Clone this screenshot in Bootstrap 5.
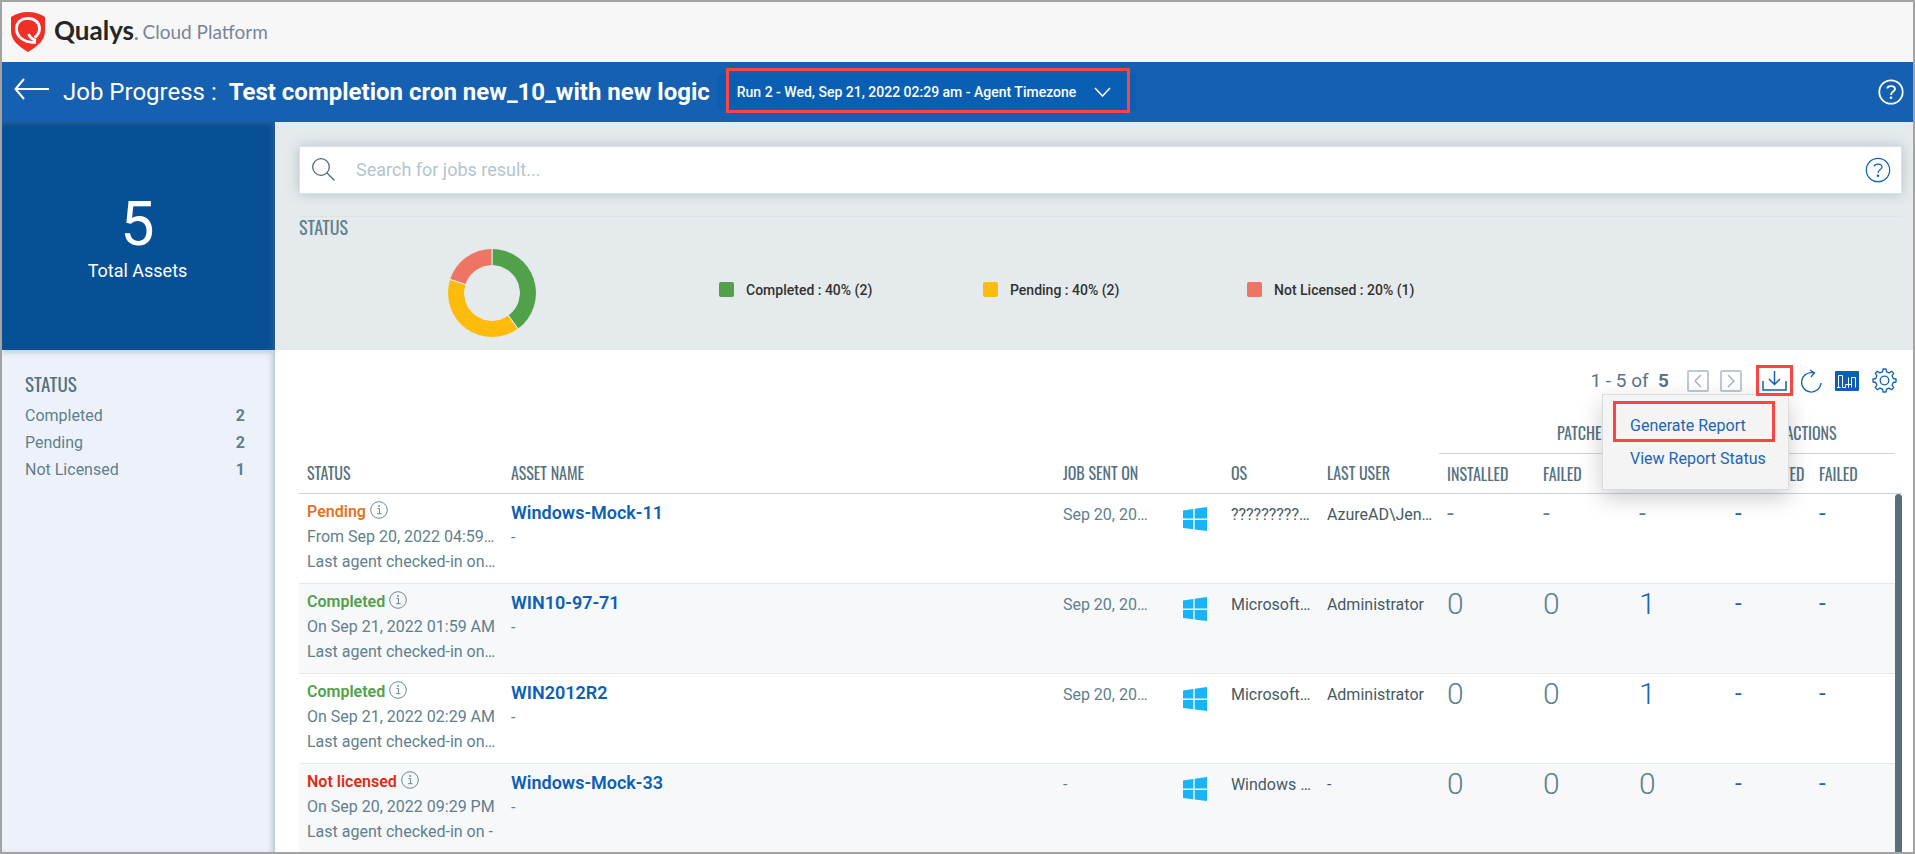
<!DOCTYPE html>
<html lang="en">
<head>
<meta charset="utf-8">
<meta name="viewport" content="width=device-width, initial-scale=1">
<title>Job Progress</title>
<link href="https://cdn.jsdelivr.net/npm/bootstrap@5.3.0/dist/css/bootstrap.min.css" rel="stylesheet">
<style>
  :root { --slate:#5f7f8d; --link:#0b5fb5; --mark:#fc4444; }
  body { font-family:Roboto,"Liberation Sans",sans-serif; font-size:16px; line-height:20px; color:var(--slate); background:#fff; }
  .shell { height:100vh; border:2px solid #a3a3a3; overflow:hidden; }
  .narrow { font-family:"Oswald","Roboto Condensed","Liberation Sans Narrow",Roboto,sans-serif; font-weight:400; }
  .topbar { height:60px; background:#f7f7f7; padding-left:9px; }
  .brand { font-family:Lato,sans-serif; font-weight:700; font-size:26px; color:#262626; margin-left:9px; }
  .brand-sub { font-family:Lato,sans-serif; font-size:19px; color:#76859b; }
  .jobbar { height:60px; background:#1560b1; color:#fff; padding:0 9px 0 12px; }
  .jobbar h1 { font-size:24px; line-height:28px; font-weight:400; margin:0 0 0 13px; }
  .jobbar h1 b { margin-left:6px; }
  .back { margin-bottom:6px; }
  .run-btn { height:36px; background:#0a5fb5; color:#fff; border:0; border-radius:0; font-size:14px; font-weight:500; padding:0 25px 0 20px; margin-left:7px; position:relative; }
  .run-btn svg { margin-left:18px; }
  .run-btn::after { content:""; position:absolute; inset:-6px 6px -3px 9px; border:3px solid var(--mark); }
  .icon-btn { background:none; border:0; padding:0; line-height:0; color:var(--link); }
  .side { width:273px; background:#edf2fa; box-shadow:inset -5px 0 6px -3px #a9bcc9; }
  .total { height:228px; background:#075095; color:#fff; box-shadow:inset -4px 0 6px -2px #2d5f92,inset 0 4px 6px -3px #2d5f92,0 3px 5px #c3d0da; padding:66px 2px 0 0; }
  .total-num { font-size:61px; line-height:72px; }
  .total-label { font-size:18px; line-height:22px; }
  .side h2 { font-size:19px; line-height:22px; color:#557180; margin:0 0 12px; }
  .side-list { padding:22px 30px 0 23px; }
  .side-list li { line-height:20px; padding-bottom:7px; }
  .summary { height:228px; background:#e5eaec; padding:24px 11px 0 24px; }
  .search { height:48px; background:#fff; border:1px solid #dbe2e5; box-shadow:0 0 12px #b4c2c9; padding:0 10px 0 12px; }
  .search input { font-size:18px; border:0; box-shadow:none; padding:0 0 0 21px; color:#333; }
  .search input::placeholder { color:#b4c5ce; opacity:1; }
  .chart-head { border-top:1px solid #dde3e6; margin-top:22px; font-size:18px; line-height:20px; }
  .chart { height:90px; margin-top:11px; color:#333; font-weight:500; font-size:14px; padding-left:148px; }
  .legend-item { width:264px; gap:12px; margin-top:-6px; }
  .chart ul { margin-left:182px; }
  .sw { width:15px; height:15px; border-radius:2px; }
  .results { padding:0 11px 0 24px; }
  .toolbar { height:64px; padding:0 5px 2px 0; }
  .pager { font-size:19px; color:#5b7582; margin-right:18px; }
  .pg { width:22px; height:22px; border:2px solid #bccad1; border-radius:2px; color:#a5b6c0; display:grid; place-items:center; padding:0; background:none; margin-right:11px; }
  .dl { width:37px; height:31px; border:3px solid var(--mark); display:grid; place-items:center; position:relative; z-index:4; }
  .dl-wrap { margin:0 8px 0 3px; }
  .menu { top:29px; left:-154px; width:187px; height:96px; background:#f4f4f4; border:1px solid #d6dee2; box-shadow:0 8px 22px #0003; padding:6px 13px 0 10px; z-index:3; }
  .menu a { color:#1b66b5; line-height:20px; text-decoration:none; display:block; white-space:nowrap; }
  .menu a.first { border:3px solid var(--mark); padding:12px 0 3px 14px; height:41px; }
  .menu a.second { padding:7px 0 0 17px; }
  .tools { gap:13px; }
  .grid { table-layout:fixed; width:100%; margin:0; }
  .grid th { font-size:16px; line-height:16px; color:#557180; padding:0 8px; text-transform:uppercase; height:40px; vertical-align:middle; white-space:nowrap; }
  .grid tr.groups th { text-align:center; border-bottom:1px solid #cfd6da; }
  .grid tr.groups th.blank { border-bottom:0; }
  .grid tr.heads th { border-bottom:1px solid #cdd4d8; }
  .grid td { height:90px; vertical-align:top; padding:11px 8px 0; border-bottom:1px solid #e4e9ec; white-space:nowrap; }
  .grid tbody tr:nth-child(even) { background:#f7f8fa; }
  .grid td.st { padding-top:6px; }
  .grid td.st div { line-height:25px; }
  .grid td.st div.state { line-height:24px; font-weight:600; }
  .grid td.st .info { margin-top:-5px; }
  .asset { font-size:18px; font-weight:600; line-height:22px; color:var(--link); text-decoration:none; }
  .grid td.asset-cell { padding-top:8px; }
  .grid td.os { padding-top:13px; }
  .dark { color:#455a64; }
  .grid td.num { font-weight:300; font-size:30px; line-height:22px; padding-top:9px; }
  .grid td.dash { font-size:24px; line-height:20px; padding-top:9px; }
  .blue { color:#1b66b5; }
  .thumb { right:0; top:80px; bottom:0; width:7px; background:#58707e; border-radius:4px 4px 0 0; }
</style>
</head>
<body>
<svg width="0" height="0" class="position-absolute" aria-hidden="true">
  <symbol id="i-info" viewBox="0 0 18 18"><g fill="none" stroke="#6d8794"><circle cx="9" cy="9" r="8.3"/><path d="M7.500 7.500h2v5M7 12.700h4.500"/></g><circle cx="9" cy="5" r=".9" fill="#6d8794"/></symbol>
  <symbol id="i-win" viewBox="0 0 24 24"><path fill="#19b3f7" d="M0 3.400 10.300 2v9.500H0zM11.700 1.800 24 0v11.500H11.700zM0 13h10.300v9.300L0 21zM11.700 13H24v11l-12.300-1.500z"/></symbol>
  <symbol id="i-help" viewBox="0 0 26 26"><g fill="none" stroke="currentColor"><circle cx="13" cy="13" r="11.700"/><path d="M9.300 9.500C9.500 6.300 17 6.300 17 10c0 2.600-4 2.600-4 6"/></g><circle cx="13" cy="18.800" r="1.300" fill="currentColor"/></symbol>
</svg>
<div class="shell d-flex flex-column">
  <header class="topbar d-flex align-items-center">
    <svg width="34" height="40" viewBox="0 0 34 40"><path fill="#ee3124" d="M17 0c6 0 12 1.500 17 5v14c0 9-7 15-17 21C7 34 0 28 0 19V5c5-3.500 11-5 17-5z"/><path d="M25 30.300C12 31 5.500 24 5.500 16.500 5.500 10 10.500 6.300 17 6.300S28.500 10.500 28.500 16.500c0 4-2 7-5 9" fill="none" stroke="#fff" stroke-width="2.800"/><path d="M17.500 22c1.500 3.500 4 5.500 7.500 6.500" fill="none" stroke="#fff" stroke-width="2.800"/></svg>
    <span class="brand">Qualys<small class="brand-sub">.</small></span>
    <span class="brand-sub ms-1">Cloud Platform</span>
  </header>
  <div class="jobbar d-flex align-items-center">
    <button class="icon-btn back text-white" aria-label="Back"><svg width="36" height="22" viewBox="0 0 36 22" fill="none" stroke="#fff" stroke-width="2"><path d="M35 11H1.500M10 1 1.500 11 10 21"/></svg></button>
    <h1>Job Progress : <b>Test completion cron new_10_with new logic</b></h1>
    <button class="run-btn d-flex align-items-center" aria-haspopup="listbox">Run 2 - Wed, Sep 21, 2022 02:29 am - Agent Timezone
      <svg width="17" height="10" viewBox="0 0 17 10" fill="none" stroke="#fff" stroke-width="1.500"><path d="m1 1 7.500 8L16 1"/></svg></button>
    <button class="icon-btn text-white ms-auto" aria-label="Help"><svg width="26" height="26" stroke-width="1.800"><use href="#i-help"/></svg></button>
  </div>
  <div class="d-flex flex-grow-1 overflow-hidden">
    <aside class="side flex-shrink-0">
      <div class="total text-center"><div class="total-num">5</div><div class="total-label">Total Assets</div></div>
      <div class="side-list">
        <h2 class="narrow">STATUS</h2>
        <ul class="list-unstyled">
          <li class="d-flex justify-content-between"><span>Completed</span><b>2</b></li>
          <li class="d-flex justify-content-between"><span>Pending</span><b>2</b></li>
          <li class="d-flex justify-content-between"><span>Not Licensed</span><b>1</b></li>
        </ul>
      </div>
    </aside>
    <main class="flex-grow-1 d-flex flex-column overflow-hidden">
      <section class="summary flex-shrink-0">
        <form class="search d-flex align-items-center">
          <svg width="23" height="23" viewBox="0 0 23 23" fill="none" stroke="#4f6976" stroke-width="1.300" class="flex-shrink-0"><circle cx="9" cy="9" r="8.300"/><path d="m15 15 7.500 7.500"/></svg>
          <input class="form-control" type="text" aria-label="Search" placeholder="Search for jobs result...">
          <button type="button" class="icon-btn" aria-label="Search help"><svg width="26" height="26" stroke-width="1.200"><use href="#i-help"/></svg></button>
        </form>
        <div class="chart-head narrow">STATUS</div>
        <div class="chart d-flex align-items-center">
          <svg width="90" height="90" viewBox="-45 -45 90 90" stroke="#e5eaec"><path fill="#50a14a" d="M0-44.500A44.500 44.500 0 0 1 26.160 36L16.160 22.250A27.500 27.500 0 0 0 0-27.500z"/><path fill="#fdbc0b" d="M26.160 36A44.500 44.500 0 0 1-42.320-13.750L-26.150-8.500A27.500 27.500 0 0 0 16.160 22.250z"/><path fill="#ee7564" d="M-42.320-13.750A44.500 44.500 0 0 1 0-44.500V-27.500A27.500 27.500 0 0 0-26.150-8.500z"/></svg>
          <ul class="list-unstyled d-flex mb-0">
            <li class="legend-item d-flex align-items-center"><span class="sw" style="background:#50a14a"></span>Completed : 40% (2)</li>
            <li class="legend-item d-flex align-items-center"><span class="sw" style="background:#fdbc0b"></span>Pending : 40% (2)</li>
            <li class="legend-item d-flex align-items-center"><span class="sw" style="background:#ee7564"></span>Not Licensed : 20% (1)</li>
          </ul>
        </div>
      </section>
      <section class="results flex-grow-1 d-flex flex-column overflow-hidden">
        <div class="toolbar flex-shrink-0 d-flex align-items-center justify-content-end">
          <span class="pager">1 - 5 of &nbsp;<b>5</b></span>
          <button class="pg" aria-label="Previous"><svg width="8" height="14" viewBox="0 0 8 14" fill="none" stroke="currentColor" stroke-width="1.500"><path d="M7 1 1 7l6 6"/></svg></button>
          <button class="pg" aria-label="Next"><svg width="8" height="14" viewBox="0 0 8 14" fill="none" stroke="currentColor" stroke-width="1.500"><path d="m1 1 6 6-6 6"/></svg></button>
          <div class="dl-wrap position-relative">
            <button class="icon-btn dl" aria-label="Download"><svg width="26" height="22" viewBox="0 0 26 22" fill="none" stroke="#1560b1" stroke-width="1.500"><path d="M1 11v9h23v-9M12.500 1v13M7 9l5.500 5.500L18 9"/></svg></button>
            <div class="menu position-absolute"><a class="first" href="#">Generate Report</a><a class="second" href="#">View Report Status</a></div>
          </div>
          <div class="tools d-flex align-items-center">
          <button class="icon-btn" aria-label="Refresh"><svg width="21" height="24" viewBox="0 0 21 24" fill="none" stroke="#1560b1" stroke-width="1.300"><path d="M13 4A9.700 9.700 0 1 0 20 14M9 1l4.500 3L10 8"/></svg></button>
          <button class="icon-btn" aria-label="Chart"><svg width="24" height="20" viewBox="0 0 24 20"><rect width="24" height="20" rx="1" fill="#0b5fb5"/><path d="M3.500 16.500v-12h4v12M7.500 16.500M10.500 16.500v-3h3v3M13.500 16.500v-10h0M16.500 16.500v-10h4v10M2 16.500h3.500M7.500 16.500h3M13.500 13.500h3" fill="none" stroke="#fff"/></svg></button>
          <button class="icon-btn" aria-label="Settings"><svg width="25" height="25" viewBox="0 0 25 25" fill="none" stroke="#1560b1" stroke-width="1.300" stroke-linejoin="round"><circle cx="12.500" cy="12.500" r="4.300"/><path d="M10.500 3.800 11 1h3l.5 2.800 2.700 1.100L19.600 3.300l2.100 2.100-1.600 2.400 1.100 2.700L24 11v3l-2.800.5-1.100 2.700 1.600 2.400-2.100 2.100-2.400-1.600-2.700 1.100L14 24h-3l-.5-2.800-2.700-1.100-2.400 1.600-2.100-2.100 1.600-2.400-1.100-2.700L1 14v-3l2.800-.5 1.100-2.700-1.600-2.400 2.100-2.100 2.400 1.600z"/></svg></button>
          </div>
        </div>
        <div class="flex-grow-1 position-relative overflow-hidden">
          <table class="grid">
            <colgroup><col style="width:204px"><col><col style="width:120px"><col style="width:48px"><col style="width:96px"><col style="width:120px"><col style="width:96px"><col style="width:96px"><col style="width:96px"><col style="width:84px"><col style="width:84px"><col style="width:7px"></colgroup>
            <thead>
              <tr class="groups"><th class="blank" colspan="6"></th><th class="narrow" colspan="3" scope="colgroup">Patches</th><th class="narrow" colspan="2" scope="colgroup">Actions</th><th class="blank p-0"></th></tr>
              <tr class="heads"><th class="narrow">Status</th><th class="narrow">Asset Name</th><th class="narrow" colspan="2">Job Sent On</th><th class="narrow">OS</th><th class="narrow">Last User</th><th class="narrow">Installed</th><th class="narrow">Failed</th><th class="narrow">Skipped</th><th class="narrow">Completed</th><th class="narrow">Failed</th><th class="p-0"></th></tr>
            </thead>
            <tbody id="rows"></tbody>
          </table>
          <div class="thumb position-absolute"></div>
        </div>
      </section>
    </main>
  </div>
</div>
<script src="https://cdn.jsdelivr.net/npm/bootstrap@5.3.0/dist/js/bootstrap.bundle.min.js"></script>
<script>
  const jobs = [
    ['Pending', '#e8711f', 'From Sep 20, 2022 04:59…', 'Last agent checked-in on…', 'Windows-Mock-11', 'Sep 20, 20…', '?????????…', 'AzureAD\\Jen…', ['-', '-', '-']],
    ['Completed', '#50a14a', 'On Sep 21, 2022 01:59 AM', 'Last agent checked-in on…', 'WIN10-97-71', 'Sep 20, 20…', 'Microsoft…', 'Administrator', [0, 0, 1]],
    ['Completed', '#50a14a', 'On Sep 21, 2022 02:29 AM', 'Last agent checked-in on…', 'WIN2012R2', 'Sep 20, 20…', 'Microsoft…', 'Administrator', [0, 0, 1]],
    ['Not licensed', '#e02b16', 'On Sep 20, 2022 09:29 PM', 'Last agent checked-in on -', 'Windows-Mock-33', '-', 'Windows …', '-', [0, 0, 0]]
  ];
  const count = (v, blue) => `<td class="${v === '-' ? 'dash' : 'num'} ${blue || v === 1 ? 'blue' : ''}">${v}</td>`;
  document.getElementById('rows').innerHTML = jobs.map(j => `<tr>
    <td class="st"><div class="state" style="color:${j[1]}">${j[0]} <svg class="info" width="18" height="18"><use href="#i-info"/></svg></div><div>${j[2]}</div><div>${j[3]}</div></td>
    <td class="asset-cell"><a class="asset" href="#">${j[4]}</a><div class="mt-1">-</div></td>
    <td>${j[5]}</td>
    <td class="os"><svg class="d-block" width="24" height="24"><use href="#i-win"/></svg></td>
    <td class="dark">${j[6]}</td>
    <td class="dark">${j[7]}</td>
    ${j[8].map(v => count(v)).join('')}${count('-', true)}${count('-', true)}<td class="p-0"></td></tr>`).join('');
</script>
</body>
</html>
